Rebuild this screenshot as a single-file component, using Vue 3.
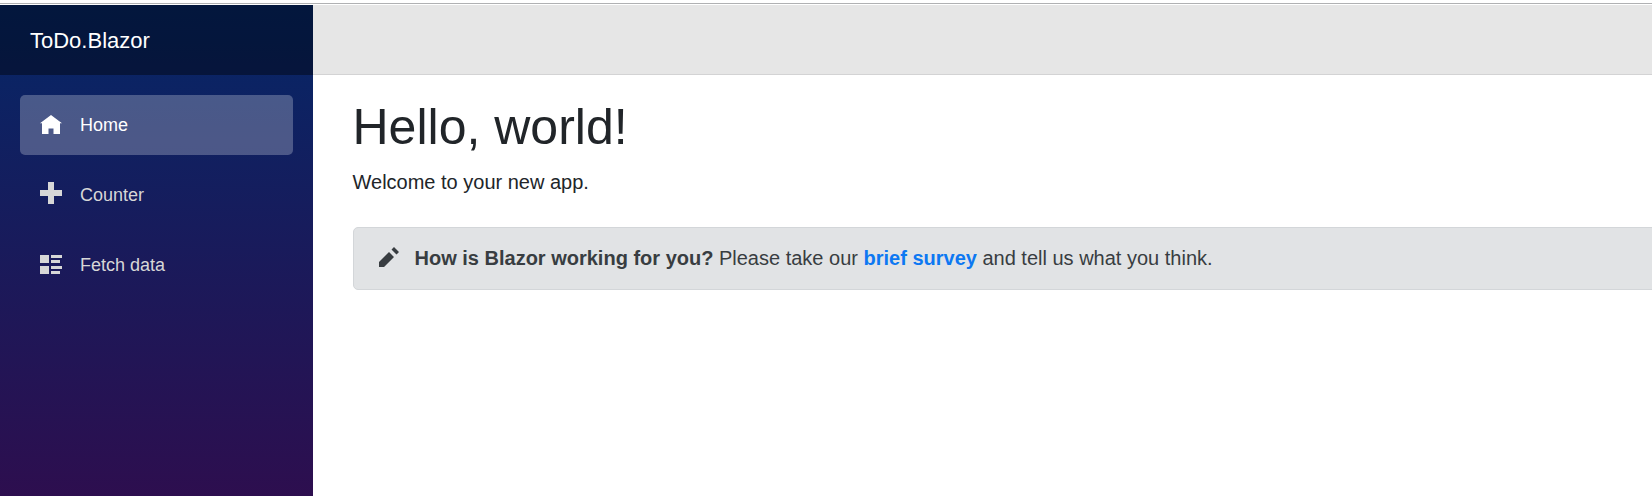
<script setup>
const links = [
  {
    label: 'Home',
    icon: 'home',
    active: true,
    path: 'M11 0L0 8.25h2V19h6.5v-5.5h5V19H20V8.2l2 .05z',
  },
  {
    label: 'Counter',
    icon: 'plus',
    path: 'M8 0v8H0v6h8v8h6v-8h8V8h-8V0z',
  },
  {
    label: 'Fetch data',
    icon: 'list',
    path: 'M0 0h9v8H0zM11 0h11v3H11zM11 5h9v3H11zM0 11h9v8H0zM11 11h11v3H11zM11 16h9v3h-9z',
  },
]
</script>

<template>
  <div class="window">
    <div class="edge"></div>
    <div class="page">
      <aside class="sidebar">
        <div class="brand"><a>ToDo.Blazor</a></div>
        <nav class="nav">
          <a v-for="link in links" :key="link.label" class="nav-link" :class="{ active: link.active }">
            <svg class="nav-icon" :class="link.icon" viewBox="0 0 22 22" aria-hidden="true">
              <path :d="link.path" />
            </svg>
            <span>{{ link.label }}</span>
          </a>
        </nav>
      </aside>
      <main class="main">
        <header class="top-row"></header>
        <section class="content">
          <h1>Hello, world!</h1>
          <p class="welcome">Welcome to your new app.</p>
          <div class="alert">
            <svg class="pencil" viewBox="0 0 8 8" aria-hidden="true">
              <path d="M6 0l-1 1 2 2 1-1-2-2zm-2 2l-4 4v2h2l4-4-2-2z" />
            </svg>
            <p><strong>How is Blazor working for you?</strong> Please take our <a class="survey">brief survey</a> and tell us what you think.</p>
          </div>
        </section>
      </main>
    </div>
  </div>
</template>

<style>
body {
  margin: 0;
  background: #fff;
}
</style>

<style scoped>
.window {
  height: 496px;
  overflow: hidden;
  font-family: "Liberation Sans", Arial, sans-serif;
  font-size: 20px;
  line-height: 30px;
  color: #212529;
  display: flex;
  flex-direction: column;
}
.edge {
  height: 3px;
  flex: none;
  border-bottom: 1px solid #b0b1b3;
  margin-bottom: 1px;
}
.page {
  flex: 1;
  display: flex;
  min-height: 0;
}
.sidebar {
  width: 312.5px;
  flex: none;
  background: linear-gradient(180deg, #052767 0, #3a0647 650px);
}
.brand {
  height: 70px;
  box-sizing: border-box;
  padding-left: 30px;
  display: flex;
  align-items: center;
  background: rgba(0, 0, 0, 0.4);
  color: #fff;
  font-size: 22px;
  line-height: 33px;
}
.nav {
  padding: 20px;
  display: flex;
  flex-direction: column;
  gap: 10px;
}
.nav-link {
  height: 60px;
  border-radius: 5px;
  padding-left: 20px;
  display: flex;
  align-items: center;
  gap: 18px;
  font-size: 18px;
  line-height: 60px;
  color: #d7d7d7;
}
.nav-link.active {
  background: rgba(255, 255, 255, 0.25);
  color: #fff;
}
.nav-icon {
  width: 22px;
  height: 22px;
  margin-top: 2px;
  fill: currentColor;
}
.nav-icon.plus {
  margin-top: 0;
  margin-bottom: 4px;
}
.main {
  flex: 1;
  min-width: 0;
}
.top-row {
  height: 69px;
  background: #e6e6e6;
  border-bottom: 1px solid #d3d3d4;
}
.content {
  padding: 22px 0 0 40px;
}
h1 {
  margin: 0 0 10px;
  font-size: 50px;
  font-weight: 400;
  line-height: 60px;
}
.welcome {
  margin: 0 0 30px;
}
.alert {
  height: 63px;
  box-sizing: border-box;
  width: 1400px;
  border: 1px solid #d3d6d9;
  border-radius: 5px;
  background: #e1e3e5;
  color: #383d41;
  padding: 0 25px 1px;
  display: flex;
  align-items: center;
}
.pencil {
  width: 20px;
  height: 20px;
  margin-right: 16px;
  margin-bottom: 2px;
  fill: currentColor;
}
.alert p {
  margin: 0;
  white-space: nowrap;
}
.survey {
  color: #0d78f2;
  font-weight: 700;
}
</style>
